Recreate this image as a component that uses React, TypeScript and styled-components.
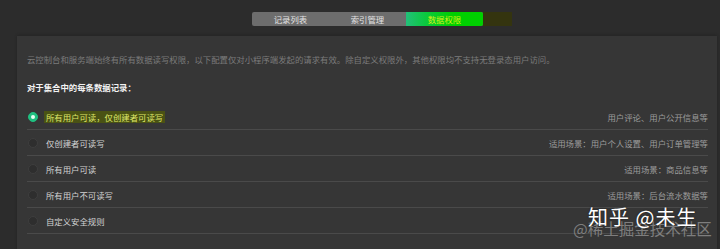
import React from "react";
import styled, { createGlobalStyle } from "styled-components";

const Global = createGlobalStyle`
  html, body { margin: 0; padding: 0; background: #2c2c2c; }
  body { font-family: "Noto Sans CJK SC", "Noto Sans", sans-serif; }
`;

const Page = styled.div`
  position: relative;
  width: 720px;
  height: 249px;
  overflow: hidden;
  background: #2c2c2c;
  padding-top: 12px;
  box-sizing: border-box;
`;

const TabRow = styled.div`
  display: flex;
  align-items: stretch;
  margin-left: 252px;
  height: 14px;
`;

const TabBar = styled.div`
  display: flex;
  background: #6d6d6d;
  border-radius: 2px;
  overflow: hidden;
`;

const Tab = styled.div<{ $active?: boolean }>`
  width: 77px;
  display: flex;
  align-items: center;
  justify-content: center;
  font-size: 8.4px;
  line-height: 14px;
  color: ${(p) => (p.$active ? "#d4ef1a" : "#e2e2e2")};
  background: ${(p) =>
    p.$active
      ? "linear-gradient(90deg, #22c07a 0%, #0cc840 25%, #00cf00 60%, #00d000 100%)"
      : "transparent"};
`;

const HighlightTail = styled.div`
  width: 29px;
  background: #34340f;
`;

const Panel = styled.div`
  margin: 10px 3px 0 17px;
  background: #363636;
  box-shadow: 0 -1px 2px #252525;
  padding: 17px 9px 0 10px;
  height: 220px;
  box-sizing: border-box;
`;

const Intro = styled.div`
  font-size: 8.4px;
  line-height: 12px;
  color: #7b7b7b;
  white-space: nowrap;
`;

const Heading = styled.div`
  margin-top: 16px;
  font-size: 8.4px;
  line-height: 12px;
  font-weight: 700;
  color: #f2f2f2;
`;

const List = styled.div`
  margin-top: 11px;
  display: flex;
  flex-direction: column;
`;

const Row = styled.div`
  height: 25px;
  border-bottom: 1px solid #4a4a4a;
  display: flex;
  align-items: center;
  justify-content: space-between;
  padding-left: 1px;
`;

const Left = styled.div`
  display: flex;
  align-items: center;
  gap: 6px;
`;

const Radio = styled.span<{ $checked?: boolean }>`
  width: 10px;
  height: 10px;
  border-radius: 50%;
  box-sizing: border-box;
  background: ${(p) => (p.$checked ? "#1fbf80" : "#2e2e2e")};
  border: 1px solid ${(p) => (p.$checked ? "#1fbf80" : "#3e3e3e")};
  display: flex;
  align-items: center;
  justify-content: center;
  &::after {
    content: "";
    width: 4px;
    height: 4px;
    border-radius: 50%;
    background: ${(p) => (p.$checked ? "#e8fff4" : "transparent")};
  }
`;

const Label = styled.span<{ $marked?: boolean }>`
  font-size: 8.4px;
  line-height: 12px;
  padding: 0 2px;
  color: ${(p) => (p.$marked ? "#dfe66a" : "#d2d2d2")};
  background: ${(p) => (p.$marked ? "#4a5214" : "transparent")};
`;

const Hint = styled.span`
  font-size: 8.4px;
  line-height: 12px;
  color: #9c9c9c;
`;

const Watermark = styled.div`
  position: absolute;
  left: 573px;
  top: 205px;
  width: 140px;
  height: 40px;
  pointer-events: none;
`;

const Zhihu = styled.div`
  position: absolute;
  left: 15px;
  top: 0;
  font-family: "Noto Sans CJK SC", sans-serif;
  font-size: 20px;
  letter-spacing: 1px;
  line-height: 24px;
  color: #ffffff;
  white-space: nowrap;
  text-shadow: 0 0 2px rgba(0, 0, 0, 0.5);
`;

const Juejin = styled.div`
  position: absolute;
  left: 0;
  top: 14px;
  font-family: "Noto Sans CJK SC", sans-serif;
  font-size: 15.5px;
  line-height: 18px;
  color: rgba(150, 150, 150, 0.75);
  white-space: nowrap;
`;

const rows = [
  { label: "所有用户可读，仅创建者可读写", hint: "用户评论、用户公开信息等", checked: true },
  { label: "仅创建者可读写", hint: "适用场景：用户个人设置、用户订单管理等" },
  { label: "所有用户可读", hint: "适用场景：商品信息等" },
  { label: "所有用户不可读写", hint: "适用场景：后台流水数据等" },
  { label: "自定义安全规则", hint: "" },
];

export default function App() {
  return (
    <>
      <Global />
      <Page>
        <TabRow>
          <TabBar>
            <Tab>记录列表</Tab>
            <Tab>索引管理</Tab>
            <Tab $active>数据权限</Tab>
          </TabBar>
          <HighlightTail />
        </TabRow>
        <Panel>
          <Intro>
            云控制台和服务端始终有所有数据读写权限，以下配置仅对小程序端发起的请求有效。除自定义权限外，其他权限均不支持无登录态用户访问。
          </Intro>
          <Heading>对于集合中的每条数据记录：</Heading>
          <List>
            {rows.map((r) => (
              <Row key={r.label}>
                <Left>
                  <Radio $checked={r.checked} />
                  <Label $marked={r.checked}>{r.label}</Label>
                </Left>
                <Hint>{r.hint}</Hint>
              </Row>
            ))}
          </List>
        </Panel>
        <Watermark>
          <Juejin>@稀土掘金技术社区</Juejin>
          <Zhihu>知乎 @未生</Zhihu>
        </Watermark>
      </Page>
    </>
  );
}
